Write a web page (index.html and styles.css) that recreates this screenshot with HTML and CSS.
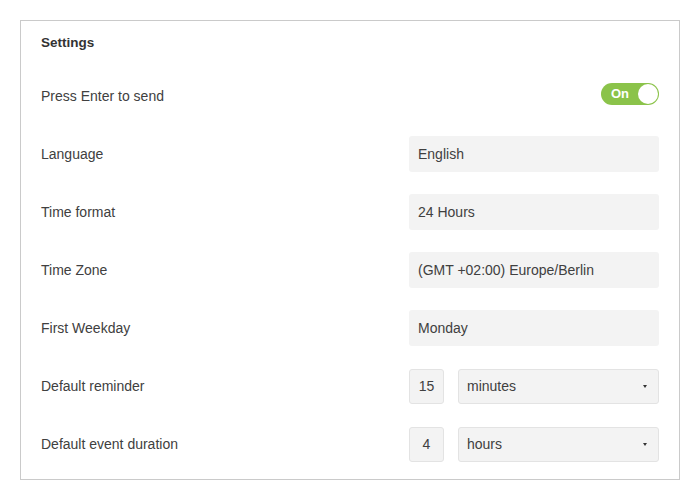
FILE: index.html
```html
<!DOCTYPE html>
<html>
<head>
<meta charset="utf-8">
<link rel="stylesheet" href="styles.css">
</head>
<body>
<div class="card">
  <div class="title">Settings</div>
  <div class="rows">
    <div class="row">
      <span class="label">Press Enter to send</span>
      <div class="toggle"><span class="toggle-text">On</span><span class="knob"></span></div>
    </div>
    <div class="row">
      <span class="label">Language</span>
      <div class="field">English</div>
    </div>
    <div class="row">
      <span class="label">Time format</span>
      <div class="field">24 Hours</div>
    </div>
    <div class="row">
      <span class="label">Time Zone</span>
      <div class="field">(GMT +02:00) Europe/Berlin</div>
    </div>
    <div class="row">
      <span class="label">First Weekday</span>
      <div class="field">Monday</div>
    </div>
    <div class="row">
      <span class="label">Default reminder</span>
      <div class="combo">
        <div class="num">15</div>
        <div class="select">minutes<span class="caret"></span></div>
      </div>
    </div>
    <div class="row">
      <span class="label">Default event duration</span>
      <div class="combo">
        <div class="num">4</div>
        <div class="select">hours<span class="caret"></span></div>
      </div>
    </div>
  </div>
</div>
</body>
</html>
```
FILE: styles.css
```css
html, body {
  margin: 0;
  padding: 0;
  background: #ffffff;
}
body {
  padding: 20px;
  font-family: "Liberation Sans", Arial, sans-serif;
  color: #404040;
}
.card {
  width: 660px;
  box-sizing: border-box;
  border: 1px solid #cacaca;
  padding: 12px 20px 17px 20px;
}
.title {
  font-size: 13.5px;
  font-weight: bold;
  line-height: 20px;
  color: #333333;
  margin-bottom: 25px;
}
.rows {
  display: flex;
  flex-direction: column;
  gap: 22px;
}
.row {
  height: 36px;
  display: flex;
  align-items: center;
  justify-content: space-between;
}
.label {
  font-size: 14px;
}
.toggle {
  position: relative;
  width: 58px;
  height: 22px;
  border-radius: 11px;
  background: #8bc34a;
  margin-bottom: 4px;
  display: flex;
  align-items: center;
}
.toggle-text {
  color: #ffffff;
  font-weight: bold;
  font-size: 13px;
  margin-left: 10px;
  line-height: 22px;
}
.knob {
  position: absolute;
  right: 1px;
  top: 1px;
  width: 20px;
  height: 20px;
  border-radius: 50%;
  background: #ffffff;
}
.field {
  width: 250px;
  height: 36px;
  box-sizing: border-box;
  background: #f3f3f3;
  border-radius: 3px;
  padding: 0 9px;
  font-size: 14px;
  line-height: 36px;
}
.combo {
  width: 250px;
  height: 35px;
  display: flex;
  gap: 14px;
}
.num {
  width: 35px;
  height: 35px;
  box-sizing: border-box;
  background: #f3f3f3;
  border: 1px solid #e3e3e3;
  border-radius: 3px;
  font-size: 14px;
  line-height: 33px;
  text-align: center;
}
.select {
  flex: 1;
  height: 35px;
  box-sizing: border-box;
  background: #f3f3f3;
  border: 1px solid #e3e3e3;
  border-radius: 3px;
  padding: 0 8px;
  font-size: 14px;
  line-height: 33px;
  display: flex;
  align-items: center;
  justify-content: space-between;
}
.caret {
  width: 0;
  height: 0;
  border-left: 2.5px solid transparent;
  border-right: 2.5px solid transparent;
  border-top: 3px solid #333333;
  margin-right: 3px;
}
```
